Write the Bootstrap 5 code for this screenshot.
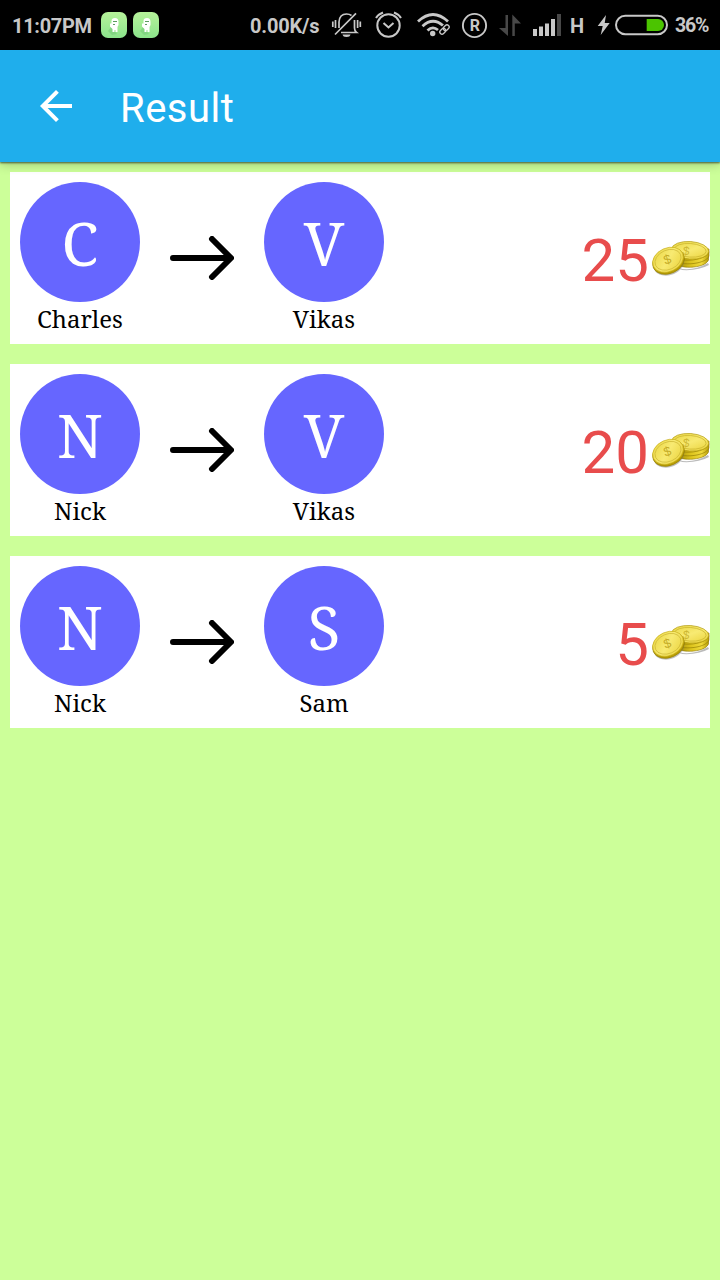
<!DOCTYPE html>
<html lang="en">
<head>
<meta charset="utf-8">
<meta name="viewport" content="width=device-width, initial-scale=1">
<title>Result</title>
<link rel="stylesheet" href="https://cdn.jsdelivr.net/npm/bootstrap@5.3.0/dist/css/bootstrap.min.css">
<script src="https://cdn.jsdelivr.net/npm/bootstrap@5.3.0/dist/js/bootstrap.bundle.min.js"></script>
<style>
body{background:#cf9;font-family:Roboto,sans-serif;min-height:1280px;overflow:hidden}
svg{display:block;flex:none}
.statusbar{height:50px;background:#000;color:#c8c8c8;font-size:20px;font-weight:700;line-height:50px;white-space:nowrap;padding:1px 0 0}
.statusbar svg{height:50px;margin-top:-1px}
.statusbar span{flex:none}
.clock{width:101px;padding-left:12px;letter-spacing:-.3px}
.rate{width:80px;letter-spacing:-.2px}
.net{width:27px}
.pct{width:45px;font-size:19.5px;letter-spacing:-1.2px}
.appbar{height:112px;background:#1faeec;padding-left:32px;box-shadow:0 1px 2px rgba(0,0,0,.6),0 3px 10px rgba(0,0,0,.2);z-index:2}
.screen-title{font-size:40px;line-height:48px;font-weight:400;letter-spacing:.5px;margin:6px 0 0 40px}
.debts{padding:10px;gap:20px}
.debt{height:172px;border:0;border-radius:0;padding:10px 0 0 10px}
.person{width:120px;color:#000;font-family:"Noto Serif","Droid Serif","DejaVu Serif Condensed","DejaVu Serif",serif}
.avatar{width:120px;height:120px;background:#66f;color:#fff;font-size:60px;line-height:122px}
.person-name{font-size:24px;line-height:34px}
.to-arrow{margin:54px 30px 0}
.amount{color:#e84c4c;font-size:60px;line-height:70px;margin-top:44px}
.coins{margin:46px 0 0 1px}
</style>
</head>
<body>
<svg width="0" height="0" class="position-absolute" aria-hidden="true">
<defs>
<linearGradient id="gold" x1="0" y1="0" x2="1" y2="1"><stop offset="0" stop-color="#e8d440"/><stop offset=".5" stop-color="#f8ea72"/><stop offset="1" stop-color="#e8d036"/></linearGradient>
<linearGradient id="rim" x1="0" x2="1"><stop offset="0" stop-color="#8a7500"/><stop offset=".5" stop-color="#dcc31c"/><stop offset=".8" stop-color="#f0da3b"/><stop offset="1" stop-color="#b89e08"/></linearGradient>
<linearGradient id="mint" x2="0" y2="1"><stop stop-color="#b6f29a"/><stop offset="1" stop-color="#8ce48c"/></linearGradient>
<symbol id="ghost" viewBox="0 0 26 26"><rect width="26" height="26" rx="7" fill="url(#mint)"/><path d="M10 15l-3 4 4 4 5-1z" fill="#77c97a" opacity=".6"/><path d="M10.500 9q0-3 3.500-3 3.500 0 3.500 4v3l-1 2v5h-2v-2h-1v2h-2v-3l-2.500-2.500v-3h1.500z" fill="#fff"/><path d="M12 9.500h4M12 12.500h2" stroke="#5c9d61" stroke-width="1"/></symbol>
<symbol id="arrow" viewBox="0 0 64 44"><path d="M3 22H60M42 3L61 22L42 41" fill="none" stroke="#000" stroke-width="6" stroke-linecap="round" stroke-linejoin="round"/></symbol>
<symbol id="coins" viewBox="0 0 60 40">
<path d="M28 30Q42 34 58 25L59 27Q48 33 32 32z" fill="#777" opacity=".5"/>
<g stroke="#8b7500" stroke-width=".6"><path d="M23 18V23C26 32 55 31 58.500 22V17z" fill="url(#rim)"/><path d="M22 15V20C26 29 56 27 59 18V14z" fill="url(#rim)"/><path d="M21.500 12V16C25 25 55 24 59 14V11z" fill="url(#rim)"/></g>
<ellipse cx="40.200" cy="12.300" rx="18.600" ry="8.800" fill="url(#gold)" stroke="#b39b10" stroke-width=".7" transform="rotate(4 40 12)"/>
<ellipse cx="40.200" cy="12.300" rx="16" ry="6.800" fill="none" stroke="#c9b32b" stroke-width=".7" transform="rotate(4 40 12)"/>
<text x="33" y="17" font-family="Liberation Sans" font-size="12" fill="#cdb632" transform="rotate(8 36 12)">$</text>
<ellipse cx="19" cy="25" rx="16" ry="12" fill="#777" opacity=".45" transform="rotate(-24 19 25)"/>
<ellipse cx="18.500" cy="23.300" rx="16.500" ry="12.300" fill="#b89d05" stroke="#8a7500" stroke-width=".5" transform="rotate(-24 18.500 23.300)"/>
<ellipse cx="18" cy="21.800" rx="16" ry="11.800" fill="url(#gold)" stroke="#c6ad16" stroke-width=".6" transform="rotate(-24 18 21.800)"/>
<ellipse cx="18" cy="21.800" rx="13.600" ry="9.700" fill="none" stroke="#ceb937" stroke-width=".7" transform="rotate(-24 18 21.800)"/>
<text x="13.500" y="26" font-family="Liberation Sans" font-size="13" fill="#c4ab26" transform="rotate(-18 17 21)">$</text>
</symbol>
</defs>
</svg>

<div class="statusbar d-flex">
<span class="clock">11:07PM</span>
<svg width="26" viewBox="0 0 26 50"><use href="#ghost" y="12" width="26" height="26"/></svg>
<svg width="26" viewBox="0 0 26 50" style="margin-left:6px"><use href="#ghost" y="12" width="26" height="26"/></svg>
<span class="rate" style="margin-left:91px">0.00K/s</span>
<svg width="38" viewBox="330 0 38 50" fill="none" stroke="#c8c8c8" stroke-width="1.700"><path d="M339 28V22Q339.500 14 346.500 14Q349.500 14 351.500 15.500M354.500 20V28Q354.500 31 356.500 32.500H341M335 34.500L356 13.300"/><path d="M342.500 34.500H350.500Q350 37 346.500 37T342.500 34.500" fill="#c8c8c8" stroke="none"/><path d="M332.800 21.500V27M335.500 20V28M357.600 20V28M360.300 21.500V27"/></svg>
<svg width="42" viewBox="368 0 42 50" fill="none" stroke="#c8c8c8" stroke-width="2"><circle cx="388.500" cy="25.500" r="11.200"/><path d="M383.500 23L388.500 27.500L393.500 23M376 18Q378 14.500 383 12.500M394 12.500Q399 14.500 401 18"/></svg>
<svg width="48" viewBox="410 0 48 50" fill="none" stroke="#c8c8c8" stroke-width="2.800"><path d="M418 21.500Q433 7.500 448 21.500M422.500 26.200Q433 16.500 443.500 26M427.500 30.500Q432.700 25.500 438 30"/><circle cx="432.700" cy="33.500" r="2.700" fill="#c8c8c8" stroke="none"/><g stroke="#000" stroke-width="3.500" transform="rotate(-45 444.500 29.500)"><rect x="438.800" y="27.300" width="6.500" height="4.400" rx="2.200"/><rect x="443.700" y="27.300" width="6.500" height="4.400" rx="2.200"/></g><g stroke-width="1.300" transform="rotate(-45 444.500 29.500)"><rect x="438.800" y="27.300" width="6.500" height="4.400" rx="2.200"/><rect x="443.700" y="27.300" width="6.500" height="4.400" rx="2.200"/></g></svg>
<svg width="34" viewBox="458 0 34 50"><circle cx="474.500" cy="25.500" r="11.600" fill="none" stroke="#c8c8c8" stroke-width="1.900"/><text x="474.800" y="31.200" text-anchor="middle" font-family="Roboto" font-weight="700" font-size="16" fill="#c8c8c8">R</text></svg>
<svg width="36" viewBox="492 0 36 50" fill="#484848"><path d="M505.500 15H508V36L499 28H505.500zM512.300 36H514.800V23.500H521L512.300 14.500z"/></svg>
<svg width="42" viewBox="528 0 42 50" fill="#c8c8c8"><path d="M533 29h4v7h-4zM539 26.500h4V36h-4zM545 23.500h4V36h-4zM551 19h4v17h-4z"/><path d="M557 14h4v22h-4z" fill="#484848"/></svg>
<span class="net">H</span>
<svg width="78" viewBox="597 0 78 50"><path d="M606 15L597.700 26H602.700L600.700 35L609.700 23H604.700z" fill="#c8c8c8"/><rect x="616" y="15.700" width="51" height="18.600" rx="9.300" fill="none" stroke="#c8c8c8" stroke-width="2"/><path d="M646.700 19H658a6 6 0 0 1 0 12H646.700z" fill="#4bc400"/></svg>
<span class="pct">36%</span>
</div>

<header class="appbar d-flex align-items-center position-relative text-white">
<svg width="48" height="48" viewBox="0 0 24 24" fill="#fff"><path d="M20 11H7.830l5.590-5.590L12 4l-8 8 8 8 1.410-1.410L7.830 13H20z"/></svg>
<h1 class="screen-title">Result</h1>
</header>

<main class="debts d-flex flex-column">
<div class="card debt flex-row align-items-start">
<div class="person text-center"><div class="avatar rounded-circle">C</div><div class="person-name">Charles</div></div>
<svg class="to-arrow" width="64" height="44"><use href="#arrow"/></svg>
<div class="person text-center"><div class="avatar rounded-circle">V</div><div class="person-name">Vikas</div></div>
<div class="amount ms-auto">25</div><svg class="coins" width="60" height="60" viewBox="0 -10 60 60"><use href="#coins" width="60" height="40"/></svg>
</div>
<div class="card debt flex-row align-items-start">
<div class="person text-center"><div class="avatar rounded-circle">N</div><div class="person-name">Nick</div></div>
<svg class="to-arrow" width="64" height="44"><use href="#arrow"/></svg>
<div class="person text-center"><div class="avatar rounded-circle">V</div><div class="person-name">Vikas</div></div>
<div class="amount ms-auto">20</div><svg class="coins" width="60" height="60" viewBox="0 -10 60 60"><use href="#coins" width="60" height="40"/></svg>
</div>
<div class="card debt flex-row align-items-start">
<div class="person text-center"><div class="avatar rounded-circle">N</div><div class="person-name">Nick</div></div>
<svg class="to-arrow" width="64" height="44"><use href="#arrow"/></svg>
<div class="person text-center"><div class="avatar rounded-circle">S</div><div class="person-name">Sam</div></div>
<div class="amount ms-auto">5</div><svg class="coins" width="60" height="60" viewBox="0 -10 60 60"><use href="#coins" width="60" height="40"/></svg>
</div>
</main>
</body>
</html>
